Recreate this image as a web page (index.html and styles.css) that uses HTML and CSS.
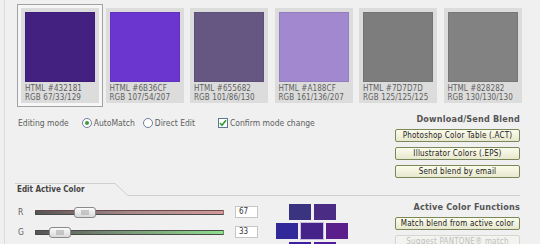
FILE: index.html
```html
<!DOCTYPE html>
<html lang="en">

<head>
    <meta charset="UTF-8">
    <title>Color Blender</title>
    <link rel="stylesheet" href="styles.css">
</head>

<body>
    <div class="page">
        <div class="tiles">
            <div class="tile selected">
                <div class="swatch" style="background: #432181"></div>
                <div class="tile-text">HTML #432181<br>RGB 67/33/129</div>
            </div>
            <div class="tile">
                <div class="swatch" style="background: #6B36CF"></div>
                <div class="tile-text">HTML #6B36CF<br>RGB 107/54/207</div>
            </div>
            <div class="tile">
                <div class="swatch" style="background: #655682"></div>
                <div class="tile-text">HTML #655682<br>RGB 101/86/130</div>
            </div>
            <div class="tile">
                <div class="swatch" style="background: #A188CF"></div>
                <div class="tile-text">HTML #A188CF<br>RGB 161/136/207</div>
            </div>
            <div class="tile">
                <div class="swatch" style="background: #7D7D7D"></div>
                <div class="tile-text">HTML #7D7D7D<br>RGB 125/125/125</div>
            </div>
            <div class="tile">
                <div class="swatch" style="background: #828282"></div>
                <div class="tile-text">HTML #828282<br>RGB 130/130/130</div>
            </div>
        </div>

        <div class="mid">
            <div class="mode-row">
                <span class="mode-label">Editing mode</span>
                <label class="opt opt-auto"><span class="radio on"></span>AutoMatch</label>
                <label class="opt opt-direct"><span class="radio"></span>Direct Edit</label>
                <label class="opt opt-confirm">
                    <span class="check">
                        <svg width="8" height="8" viewBox="0 0 8 8"><path d="M1 4 L3 6.2 L7 1.2" /></svg>
                    </span>Confirm mode change
                </label>
            </div>
            <div class="actions">
                <h4>Download/Send Blend</h4>
                <button class="btn">Photoshop Color Table (.ACT)</button>
                <button class="btn">Illustrator Colors (.EPS)</button>
                <button class="btn">Send blend by email</button>
            </div>
        </div>

        <div class="section-head">
            <div class="tab">Edit Active Color</div>
            <svg class="tab-slope" width="13" height="13" viewBox="0 0 13 13"><path d="M0 0.5 L13 12.5" /></svg>
            <div class="head-line"></div>
        </div>

        <div class="edit">
            <div class="sliders">
                <div class="slider-row">
                    <span class="chan">R</span>
                    <div class="track red">
                        <span class="thumb" style="left: 38px"></span>
                    </div>
                    <span class="value">67</span>
                </div>
                <div class="slider-row">
                    <span class="chan">G</span>
                    <div class="track green">
                        <span class="thumb" style="left: 13px"></span>
                    </div>
                    <span class="value">33</span>
                </div>
            </div>

            <div class="hexes">
                <div class="hex-row indent">
                    <span class="hex" style="background: #3a3480"></span>
                    <span class="hex" style="background: #4b2c84"></span>
                </div>
                <div class="hex-row">
                    <span class="hex" style="background: #31289a"></span>
                    <span class="hex active" style="background: #44228a"></span>
                    <span class="hex" style="background: #5b1f8c"></span>
                </div>
                <div class="hex-row indent">
                    <span class="hex" style="background: #3c1fa2"></span>
                    <span class="hex" style="background: #4e1e9c"></span>
                </div>
            </div>

            <div class="actions">
                <h4>Active Color Functions</h4>
                <button class="btn">Match blend from active color</button>
                <button class="btn" disabled>Suggest PANTONE® match</button>
            </div>
        </div>
    </div>
</body>

</html>
```

FILE: styles.css
```css
body {
    margin: 0;
    background: #f0f0f0;
    font-family: "DejaVu Sans Condensed", "DejaVu Sans", sans-serif;
    color: #555;
    overflow: hidden;
}

.page {
    margin-left: 4px;
    border-left: 1px solid #dcdcdc;
    height: 244px;
}

/* blend tiles */
.tiles {
    display: flex;
    gap: 6.5px;
    padding: 8px 0 0 16px;
}

.tile {
    width: 78px;
    height: 95px;
    box-sizing: border-box;
    padding: 4px 4px 0;
    background: #dcdcdc;
}

.tile.selected {
    box-shadow: 0 0 0 3px #f6f6f6, 0 0 0 4px #a2a2a2;
}

.swatch {
    width: 70px;
    height: 70px;
    box-sizing: border-box;
    border: 1px solid rgba(0, 0, 0, 0.08);
}

.tile-text {
    margin-top: 2px;
    font-size: 8px;
    line-height: 9px;
    color: #5e5e5e;
    letter-spacing: 0.1px;
    white-space: nowrap;
}

/* editing mode + download */
.mid {
    display: flex;
    justify-content: space-between;
    margin-top: 11px;
    padding: 0 20px 0 13px;
}

.mode-row {
    display: flex;
    align-items: center;
    height: 12px;
    margin-top: 3px;
    font-size: 8.5px;
    color: #5e5e5e;
}

.opt {
    display: flex;
    align-items: center;
    gap: 2px;
}

.opt-auto {
    margin-left: 13px;
}

.opt-direct {
    margin-left: 8px;
}

.opt-confirm {
    margin-left: 23px;
}

.radio {
    width: 10px;
    height: 10px;
    box-sizing: border-box;
    border: 1px solid #6d7f99;
    border-radius: 50%;
    background: #fff;
    display: flex;
    align-items: center;
    justify-content: center;
}

.radio.on::after {
    content: "";
    width: 4px;
    height: 4px;
    border-radius: 50%;
    background: #3f9b3c;
}

.check {
    width: 10px;
    height: 10px;
    box-sizing: border-box;
    border: 1px solid #5d7896;
    background: #fff;
    display: flex;
    align-items: center;
    justify-content: center;
}

.check path {
    fill: none;
    stroke: #2f9a2f;
    stroke-width: 1.6;
}

.actions {
    width: 125px;
    display: flex;
    flex-direction: column;
    gap: 5px;
}

.actions h4 {
    margin: 0;
    height: 10px;
    line-height: 10px;
    font-size: 9px;
    font-weight: bold;
    text-align: right;
    color: #555;
    letter-spacing: 0.2px;
}

.btn {
    height: 13px;
    padding: 0;
    border: 1px solid #7a8758;
    border-radius: 2px;
    background: linear-gradient(#fcfcec, #e8e8cf);
    font-family: inherit;
    font-size: 8px;
    line-height: 11px;
    color: #1a1a1a;
    letter-spacing: 0.2px;
}

.btn:disabled {
    border-color: #d6d6d0;
    background: #f3f3ef;
    color: #c0c0c0;
}

/* edit active color header */
.section-head {
    display: flex;
    margin-top: 5px;
    height: 13px;
}

.tab {
    width: 100px;
    margin-left: 10px;
    padding-left: 2px;
    box-sizing: border-box;
    border-top: 1px solid #cfcfcf;
    font-size: 8px;
    font-weight: bold;
    line-height: 12px;
    color: #444;
}

.tab-slope path {
    stroke: #cfcfcf;
    stroke-width: 1;
}

.head-line {
    flex: 1;
    margin-right: 20px;
    height: 12px;
    border-bottom: 1px solid #cfcfcf;
}

/* sliders */
.edit {
    display: flex;
    padding: 0 20px 0 13px;
}

.sliders {
    padding-top: 6px;
}

.slider-row {
    display: flex;
    align-items: center;
    height: 20px;
}

.chan {
    width: 17px;
    font-size: 8.5px;
    color: #5e5e5e;
}

.track {
    position: relative;
    width: 189px;
    height: 5px;
    box-sizing: border-box;
    border: 1px solid #4a4a4a;
    border-radius: 1px;
}

.track.red {
    border-right-color: #b06060;
    background: linear-gradient(to right, #555, #a88a8a 50%, #d39a9a);
    border-top-color: #6a4a4a;
}

.track.green {
    background: linear-gradient(to right, #555, #7a9a7a 50%, #8ee08e);
    border-right-color: #50a050;
}

.thumb {
    position: absolute;
    top: -4px;
    width: 22px;
    height: 11px;
    box-sizing: border-box;
    border: 1px solid #8a8a8a;
    border-radius: 3px;
    background: linear-gradient(#fbfbfb, #d9d9d9);
}

.thumb::after {
    content: "";
    position: absolute;
    left: 6px;
    top: 2px;
    width: 8px;
    height: 5px;
    background: radial-gradient(circle, #b0b0b0 0.6px, transparent 0.9px) 0 0 / 2px 2px;
}

.value {
    width: 23px;
    height: 12px;
    margin-left: 11px;
    box-sizing: border-box;
    padding-left: 3px;
    border: 1px solid #c6c6c6;
    background: #fff;
    font-size: 8px;
    line-height: 10px;
    color: #333;
}

/* hex swatches */
.hexes {
    margin: 8px 0 0 18px;
    display: flex;
    flex-direction: column;
    gap: 3px;
}

.hex-row {
    display: flex;
    gap: 3px;
}

.hex-row.indent {
    padding-left: 13px;
}

.hex {
    width: 22px;
    height: 16px;
}

.hex.active {
    box-shadow: 0 0 0 1px #c8bde0;
}

.edit .actions {
    margin-left: auto;
    padding-top: 6px;
}
```
